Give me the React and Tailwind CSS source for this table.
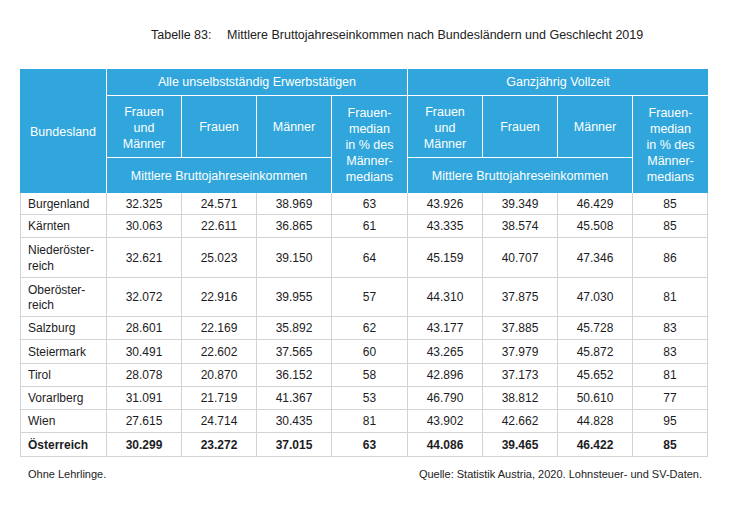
import React from "react";

const rows = [
  { land: "Burgenland", h: "h-[22px]", v: ["32.325", "24.571", "38.969", "63", "43.926", "39.349", "46.429", "85"] },
  { land: "Kärnten", h: "h-[23px]", v: ["30.063", "22.611", "36.865", "61", "43.335", "38.574", "45.508", "85"] },
  { land: ["Niederöster-", "reich"], h: "h-[40px]", v: ["32.621", "25.023", "39.150", "64", "45.159", "40.707", "47.346", "86"] },
  { land: ["Oberöster-", "reich"], h: "h-[39px]", v: ["32.072", "22.916", "39.955", "57", "44.310", "37.875", "47.030", "81"] },
  { land: "Salzburg", h: "h-[23px]", v: ["28.601", "22.169", "35.892", "62", "43.177", "37.885", "45.728", "83"] },
  { land: "Steiermark", h: "h-[24px]", v: ["30.491", "22.602", "37.565", "60", "43.265", "37.979", "45.872", "83"] },
  { land: "Tirol", h: "h-[23px]", v: ["28.078", "20.870", "36.152", "58", "42.896", "37.173", "45.652", "81"] },
  { land: "Vorarlberg", h: "h-[23px]", v: ["31.091", "21.719", "41.367", "53", "46.790", "38.812", "50.610", "77"] },
  { land: "Wien", h: "h-[23px]", v: ["27.615", "24.714", "30.435", "81", "43.902", "42.662", "44.828", "95"] },
  { land: "Österreich", h: "h-[24px]", v: ["30.299", "23.272", "37.015", "63", "44.086", "39.465", "46.422", "85"], bold: true },
];

const cols = "grid grid-cols-[87px_75px_75px_75px_76px_75px_75px_75px_75px]";

export default function App() {
  return (
    <div className="w-[747px] h-[509px] bg-white font-['Liberation_Sans',Arial,sans-serif] text-[#1c1c24]">
      <div className="flex pt-[27px] pl-[151px] text-[12.5px] leading-[16px] text-[#222]">
        <span className="w-[76px]">Tabelle 83:</span>
        <span>Mittlere Bruttojahreseinkommen nach Bundesländern und Geschlecht 2019</span>
      </div>

      <div className="ml-[20px] mt-[26px] w-[688px]">
        {/* header */}
        <div className={`${cols} grid-rows-[27px_62px_35px] bg-[#30a6dc] text-white text-[12.5px]`}>
          <div className="row-span-3 col-start-1 row-start-1 flex items-center justify-center pt-[2px] border-r border-white">
            Bundesland
          </div>

          <div className="col-start-2 col-span-4 row-start-1 flex items-center justify-center pt-[1px] border-r border-b border-white">
            Alle unselbstständig Erwerbstätigen
          </div>
          <div className="col-start-2 row-start-2 flex items-center justify-center pt-[2px] border-r border-b border-white text-center leading-[16px]">
            Frauen<br />und<br />Männer
          </div>
          <div className="col-start-3 row-start-2 flex items-center justify-center pt-[2px] border-r border-b border-white">Frauen</div>
          <div className="col-start-4 row-start-2 flex items-center justify-center pt-[2px] border-r border-b border-white">Männer</div>
          <div className="col-start-5 row-start-2 row-span-2 flex items-center justify-center pt-[1px] text-center leading-[16px] border-r border-white">
            Frauen-<br />median<br />in % des<br />Männer-<br />medians
          </div>
          <div className="col-start-2 col-span-3 row-start-3 flex items-center justify-center pt-[2px] border-r border-white">
            Mittlere Bruttojahreseinkommen
          </div>

          <div className="col-start-6 col-span-4 row-start-1 flex items-center justify-center pt-[1px] border-b border-white">
            Ganzjährig Vollzeit
          </div>
          <div className="col-start-6 row-start-2 flex items-center justify-center pt-[2px] border-r border-b border-white text-center leading-[16px]">
            Frauen<br />und<br />Männer
          </div>
          <div className="col-start-7 row-start-2 flex items-center justify-center pt-[2px] border-r border-b border-white">Frauen</div>
          <div className="col-start-8 row-start-2 flex items-center justify-center pt-[2px] border-r border-b border-white">Männer</div>
          <div className="col-start-9 row-start-2 row-span-2 flex items-center justify-center pt-[1px] text-center leading-[16px]">
            Frauen-<br />median<br />in % des<br />Männer-<br />medians
          </div>
          <div className="col-start-6 col-span-3 row-start-3 flex items-center justify-center pt-[2px] border-r border-white">
            Mittlere Bruttojahreseinkommen
          </div>
        </div>

        {/* body */}
        {rows.map((r) => (
          <div key={r.v.join()} className={`${cols} ${r.h} text-[12px] leading-[15.5px] ${r.bold ? "font-bold" : ""}`}>
            <div className="flex items-center pl-[7px] pt-[2px] border-l border-r border-b border-[#d2d3d8]">
              {Array.isArray(r.land) ? (
                <span>
                  {r.land[0]}
                  <br />
                  {r.land[1]}
                </span>
              ) : (
                r.land
              )}
            </div>
            {r.v.map((val, i) => (
              <div key={i} className="flex items-center justify-center pt-[2px] border-r border-b border-[#d2d3d8]">
                {val}
              </div>
            ))}
          </div>
        ))}

        <div className="flex justify-between mt-[10px] pl-[8px] pr-[6px] text-[11px] leading-[14px] text-[#222]">
          <span>Ohne Lehrlinge.</span>
          <span>Quelle: Statistik Austria, 2020. Lohnsteuer- und SV-Daten.</span>
        </div>
      </div>
    </div>
  );
}
